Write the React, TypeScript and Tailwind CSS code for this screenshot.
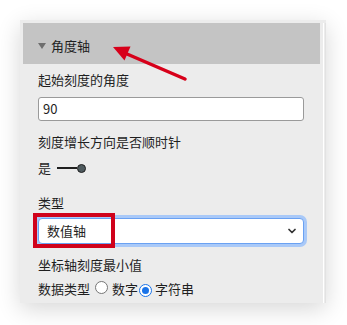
import React from "react";
import { ChevronDown } from "lucide-react";

const font = { fontFamily: '"Noto Sans CJK SC", "Noto Sans", sans-serif' };

const Radio = ({ checked }: { checked?: boolean }) => (
	<span
		className={`inline-flex h-[13px] w-[13px] shrink-0 items-center justify-center rounded-full border bg-white ${
			checked ? "border-[#1a73e8] border-[1.5px]" : "border-[#767676]"
		}`}
	>
		{checked && <span className="h-[7px] w-[7px] rounded-full bg-[#1a73e8]" />}
	</span>
);

const App = () => {
	return (
		<div className="relative h-[325px] w-[347px] overflow-hidden bg-white text-[13px] text-[#1f1f1f]" style={font}>
			<div className="ml-[20px] mt-[20px] flex w-[306px] bg-[#ececec] pl-[3px] pt-[3px] shadow-[0_6px_22px_rgba(0,0,0,0.16)]">
				<div className="flex w-[297px] flex-col pb-[5px]">
					<div className="flex h-[41px] items-center gap-[5px] bg-[#c4c4c4] pl-[15px] pt-[4px]">
						<span className="h-0 w-0 border-x-[4px] border-t-[6px] border-x-transparent border-t-[#6e6e6e]" />
						<span className="leading-[18px]">角度轴</span>
					</div>

					<div className="flex flex-col pl-[15px]">
						<div className="mt-[7px] leading-[18px]">起始刻度的角度</div>
						<div className="mt-[8px] flex h-[24px] w-[266px] items-center rounded-[3px] border border-[#9a9a9a] bg-white px-[4px]">
							90
						</div>

						<div className="mt-[12px] leading-[18px]">刻度增长方向是否顺时针</div>
						<div className="mt-[8px] flex h-[18px] items-center">
							<span className="leading-[18px]">是</span>
							<span className="ml-[6px] h-[2px] w-[20px] bg-[#1f1f1f]" />
							<span className="h-[9px] w-[9px] rounded-full border-[1.5px] border-[#1f1f1f] bg-[#4e5a5e]" />
						</div>

						<div className="mt-[17px] leading-[18px]">类型</div>
						<div className="relative mt-[6px] w-[266px]">
							<div className="flex h-[26px] items-center justify-between rounded-[4px] border border-[#6aa1f2] bg-white pl-[8px] pr-[5px] ring-[3px] ring-[#a9c9f8]">
								<span>数值轴</span>
								<ChevronDown size={12} strokeWidth={3.5} className="text-[#333]" />
							</div>
							<div className="absolute left-[-5px] top-[-5px] h-[35px] w-[82px] border-[4px] border-[#d0021b]" />
						</div>

						<div className="mt-[12px] leading-[18px]">坐标轴刻度最小值</div>
						<div className="mt-[6px] flex h-[18px] items-center leading-[18px]">
							<span>数据类型</span>
							<span className="ml-[5px]"><Radio /></span>
							<span className="ml-[4px]">数字</span>
							<span className="ml-[1px]"><Radio checked /></span>
							<span className="ml-[3px]">字符串</span>
						</div>
					</div>
				</div>
				<div className="ml-[3px] mr-[1px] w-[1px] bg-white" />
				<div className="w-[1px] bg-[#e2e2e2]" />
			</div>

			<svg className="absolute left-0 top-0" width="347" height="325">
				<line x1="185" y1="79" x2="127" y2="54" stroke="#d7001a" strokeWidth="3.5" strokeLinecap="round" />
				<polygon points="113,47 130.5,46.5 124.5,60.5" fill="#d7001a" />
			</svg>
		</div>
	);
};

export default App;
